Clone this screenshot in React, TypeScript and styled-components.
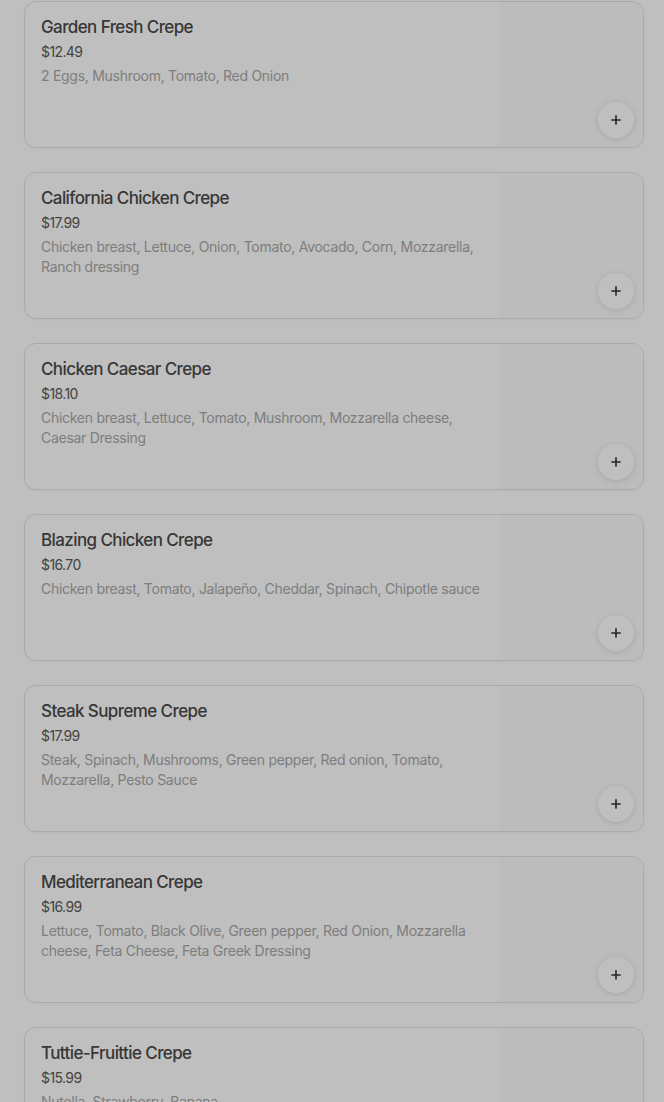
import styled, { createGlobalStyle } from "styled-components";
import { Plus } from "lucide-react";

const crepes = [
  {
    name: "Garden Fresh Crepe",
    price: "$12.49",
    desc: "2 Eggs, Mushroom, Tomato, Red Onion",
  },
  {
    name: "California Chicken Crepe",
    price: "$17.99",
    desc: "Chicken breast, Lettuce, Onion, Tomato, Avocado, Corn, Mozzarella, Ranch dressing",
  },
  {
    name: "Chicken Caesar Crepe",
    price: "$18.10",
    desc: "Chicken breast, Lettuce, Tomato, Mushroom, Mozzarella cheese, Caesar Dressing",
  },
  {
    name: "Blazing Chicken Crepe",
    price: "$16.70",
    desc: "Chicken breast, Tomato, Jalapeño, Cheddar, Spinach, Chipotle sauce",
  },
  {
    name: "Steak Supreme Crepe",
    price: "$17.99",
    desc: "Steak, Spinach, Mushrooms, Green pepper, Red onion, Tomato, Mozzarella, Pesto Sauce",
  },
  {
    name: "Mediterranean Crepe",
    price: "$16.99",
    desc: "Lettuce, Tomato, Black Olive, Green pepper, Red Onion, Mozzarella cheese, Feta Cheese, Feta Greek Dressing",
  },
  {
    name: "Tuttie-Fruittie Crepe",
    price: "$15.99",
    desc: "Nutella, Strawberry, Banana",
  },
];

function App() {
  return (
    <>
      <GlobalStyle />
      <MenuList>
        {crepes.map((item, index) => (
          <ItemCard key={index}>
            <ItemInfo>
              <ItemName>{item.name}</ItemName>
              <ItemPrice>{item.price}</ItemPrice>
              <ItemDesc>{item.desc}</ItemDesc>
            </ItemInfo>
            <ImageSlot />
            <AddButton aria-label="Add">
              <Plus size={14} strokeWidth={2.8} />
            </AddButton>
          </ItemCard>
        ))}
      </MenuList>
      <Backdrop />
    </>
  );
}
export default App;

const GlobalStyle = createGlobalStyle`
  body {
    margin: 0;
    background: #ffffff;
    font-family: Inter, "Noto Sans", sans-serif;
    overflow: hidden;
  }
`;

const MenuList = styled.div`
  display: flex;
  flex-direction: column;
  gap: 24px;
  padding: 1px 20px 0 24px;
`;

const ItemCard = styled.div`
  position: relative;
  display: flex;
  min-height: 145px;
  border: 1px solid #e3e3e3;
  border-radius: 12px;
  background: #ffffff;
  box-shadow: 0 1px 3px rgba(0, 0, 0, 0.04);
  overflow: hidden;
`;

const ItemInfo = styled.div`
  flex: 1;
  padding: 14px 0 14px 16px;
  min-width: 0;
`;

const ImageSlot = styled.div`
  width: 144px;
  flex-shrink: 0;
  background: #fbfbfb;
`;

const ItemName = styled.h3`
  margin: 0;
  font-size: 17px;
  line-height: 22px;
  font-weight: 500;
  color: #4a4a4a;
  letter-spacing: -0.6px;
`;

const ItemPrice = styled.p`
  margin: 4px 0 0;
  font-size: 14px;
  line-height: 20px;
  color: #5a5a5a;
  letter-spacing: -0.6px;
`;

const ItemDesc = styled.p`
  margin: 4px 0 0;
  font-size: 14px;
  line-height: 20px;
  color: #a8a8a8;
  letter-spacing: -0.28px;
  padding-right: 6px;
`;

const AddButton = styled.button`
  position: absolute;
  right: 9px;
  bottom: 9px;
  width: 36px;
  height: 36px;
  border: none;
  border-radius: 50%;
  background: #ffffff;
  box-shadow: 0 1px 6px rgba(0, 0, 0, 0.12);
  color: #333333;
  display: flex;
  align-items: center;
  justify-content: center;
  padding: 0;
`;

const Backdrop = styled.div`
  position: fixed;
  inset: 0;
  background: rgba(0, 0, 0, 0.25);
`;
